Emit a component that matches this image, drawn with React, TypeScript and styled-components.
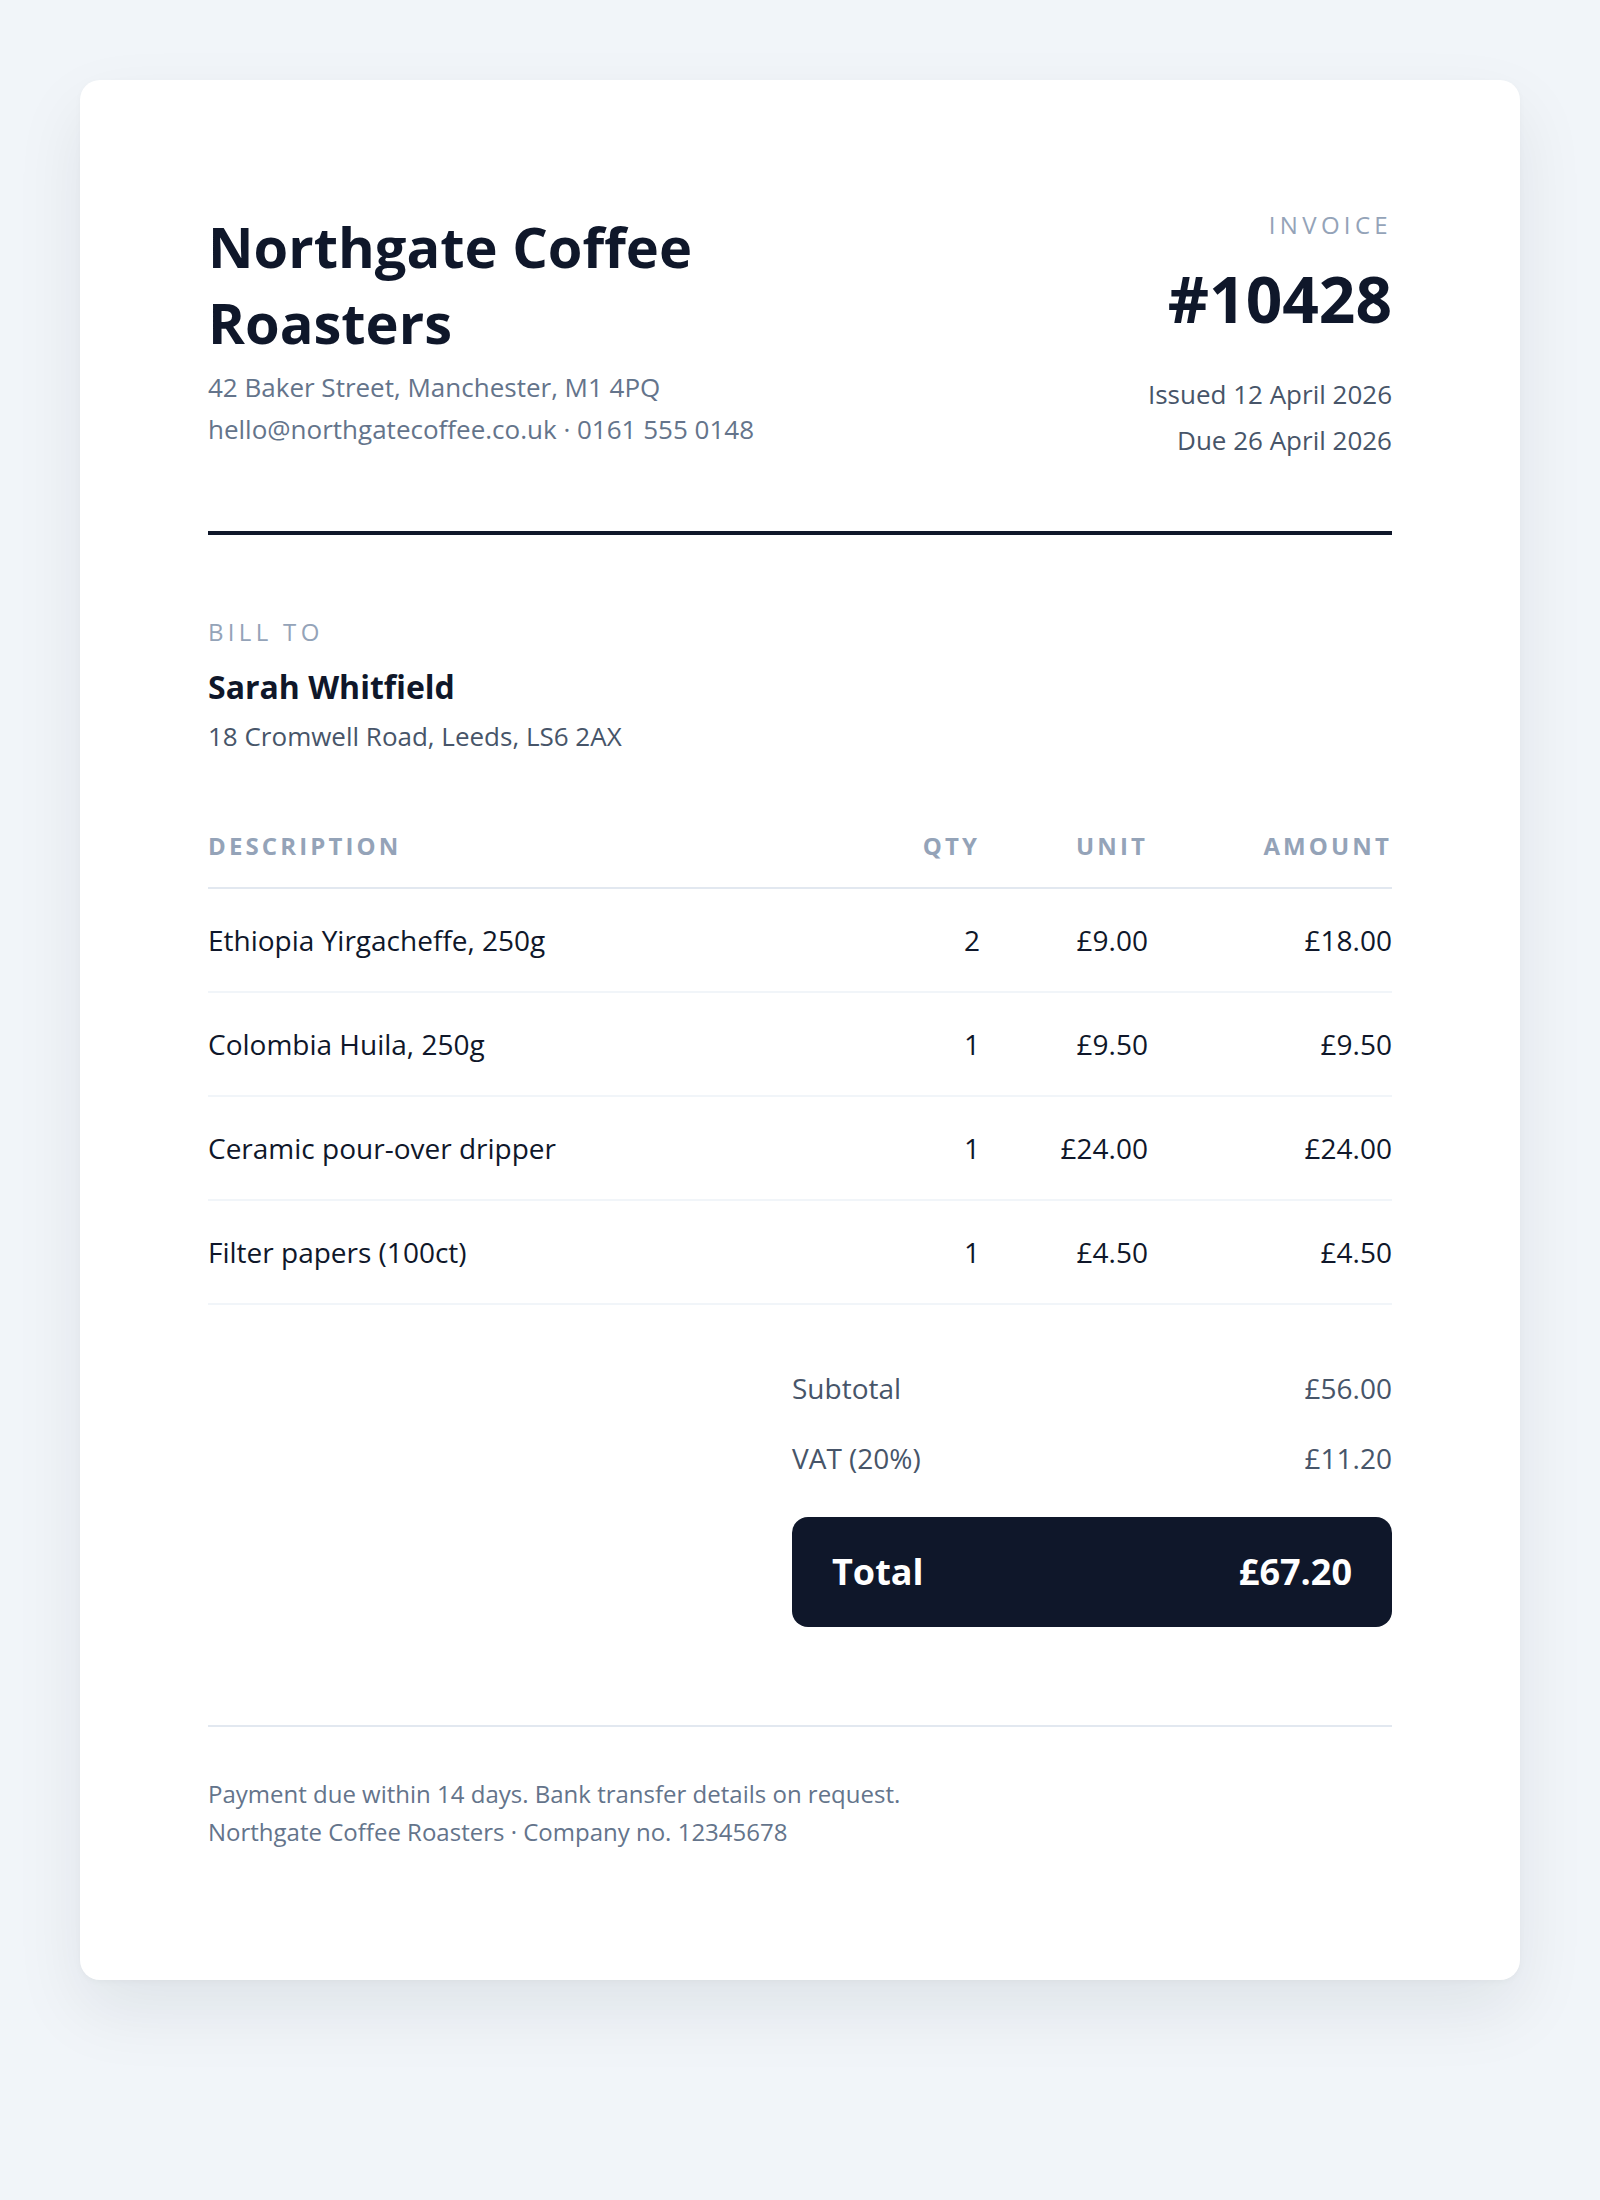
import React from "react";
import styled, { createGlobalStyle } from "styled-components";

const GlobalStyle = createGlobalStyle`
  body {
    margin: 0;
    background: #f1f5f9;
    font-family: "Open Sans", "Liberation Sans", sans-serif;
    color: #0f172a;
  }
`;

const Page = styled.div`
  display: flex;
  justify-content: center;
  padding: 80px 0 220px;
`;

const Card = styled.div`
  width: 1440px;
  box-sizing: border-box;
  padding: 128px;
  background: #ffffff;
  border-radius: 20px;
  box-shadow: 0 30px 70px rgba(15, 23, 42, 0.08), 0 2px 6px rgba(15, 23, 42, 0.03);
`;

const Header = styled.header`
  display: flex;
  justify-content: space-between;
  align-items: flex-start;
  padding-bottom: 68px;
  border-bottom: 4px solid #0f172a;
`;

const Brand = styled.div`
  max-width: 640px;
`;

const CompanyName = styled.h1`
  margin: 0;
  font-size: 56px;
  line-height: 76px;
  font-weight: 700;
  color: #0f172a;
`;

const InfoLines = styled.div<{ $tone?: "muted" | "soft"; $lh: number }>`
  font-size: 26px;
  line-height: ${p => p.$lh}px;
  color: ${p => (p.$tone === "soft" ? "#475569" : "#64748b")};
`;

const BrandInfo = styled(InfoLines)`
  margin-top: 6px;
`;

const Meta = styled.div`
  display: flex;
  flex-direction: column;
  align-items: flex-end;
  text-align: right;
`;

const Label = styled.div`
  font-size: 24px;
  line-height: 33px;
  letter-spacing: 0.18em;
  text-transform: uppercase;
  color: #94a3b8;
`;

const InvoiceNumber = styled.div`
  margin-top: 20px;
  font-size: 64px;
  line-height: 76px;
  font-weight: 700;
  color: #0f172a;
`;

const Dates = styled(InfoLines)`
  margin-top: 34px;
`;

const BillTo = styled.section`
  margin-top: 80px;
`;

const ClientName = styled.div`
  margin-top: 17px;
  font-size: 32px;
  line-height: 44px;
  font-weight: 700;
  color: #0f172a;
`;

const ClientAddress = styled(InfoLines)`
  margin-top: 7px;
`;

const Table = styled.div`
  margin-top: 73px;
`;

const Row = styled.div<{ $head?: boolean }>`
  display: grid;
  grid-template-columns: 1fr 120px 168px 244px;
  align-items: center;
  padding: ${p => (p.$head ? "0 0 25px" : "30px 0")};
  border-bottom: 2px solid ${p => (p.$head ? "#e2e8f0" : "#f1f5f9")};
`;

const HeadCell = styled.div<{ $right?: boolean }>`
  font-size: 24px;
  line-height: 33px;
  font-weight: 700;
  letter-spacing: 0.13em;
  color: #94a3b8;
  text-align: ${p => (p.$right ? "right" : "left")};
`;

const Cell = styled.div<{ $right?: boolean }>`
  font-size: 28px;
  line-height: 42px;
  color: #0f172a;
  text-align: ${p => (p.$right ? "right" : "left")};
`;

const Summary = styled.div`
  display: flex;
  justify-content: flex-end;
  margin-top: 48px;
`;

const Totals = styled.div`
  width: 600px;
`;

const TotalLine = styled.div`
  display: flex;
  justify-content: space-between;
  padding: 14px 0;
  font-size: 28px;
  line-height: 42px;
  color: #475569;
`;

const GrandTotal = styled.div`
  display: flex;
  justify-content: space-between;
  margin-top: 24px;
  padding: 28px 40px;
  border-radius: 16px;
  background: #0f172a;
  color: #ffffff;
  font-size: 36px;
  line-height: 54px;
  font-weight: 700;
`;

const Footer = styled.footer`
  margin-top: 98px;
  padding-top: 48px;
  border-top: 2px solid #e2e8f0;
  font-size: 24px;
  line-height: 38.4px;
  color: #64748b;
`;

type Item = {
  description: string;
  qty: number;
  unit: string;
  amount: string;
};

const items: Item[] = [
  { description: "Ethiopia Yirgacheffe, 250g", qty: 2, unit: "£9.00", amount: "£18.00" },
  { description: "Colombia Huila, 250g", qty: 1, unit: "£9.50", amount: "£9.50" },
  { description: "Ceramic pour-over dripper", qty: 1, unit: "£24.00", amount: "£24.00" },
  { description: "Filter papers (100ct)", qty: 1, unit: "£4.50", amount: "£4.50" },
];

function App() {
  return (
    <>
      <GlobalStyle />
      <Page>
        <Card>
          <Header>
            <Brand>
              <CompanyName>Northgate Coffee Roasters</CompanyName>
              <BrandInfo $lh={42}>
                <div>42 Baker Street, Manchester, M1 4PQ</div>
                <div>hello@northgatecoffee.co.uk · 0161 555 0148</div>
              </BrandInfo>
            </Brand>
            <Meta>
              <Label>Invoice</Label>
              <InvoiceNumber>#10428</InvoiceNumber>
              <Dates $tone="soft" $lh={46}>
                <div>Issued 12 April 2026</div>
                <div>Due 26 April 2026</div>
              </Dates>
            </Meta>
          </Header>

          <BillTo>
            <Label>Bill to</Label>
            <ClientName>Sarah Whitfield</ClientName>
            <ClientAddress $tone="soft" $lh={40}>18 Cromwell Road, Leeds, LS6 2AX</ClientAddress>
          </BillTo>

          <Table>
            <Row $head>
              <HeadCell>DESCRIPTION</HeadCell>
              <HeadCell $right>QTY</HeadCell>
              <HeadCell $right>UNIT</HeadCell>
              <HeadCell $right>AMOUNT</HeadCell>
            </Row>
            {items.map(item => (
              <Row key={item.description}>
                <Cell>{item.description}</Cell>
                <Cell $right>{item.qty}</Cell>
                <Cell $right>{item.unit}</Cell>
                <Cell $right>{item.amount}</Cell>
              </Row>
            ))}
          </Table>

          <Summary>
            <Totals>
              <TotalLine>
                <span>Subtotal</span>
                <span>£56.00</span>
              </TotalLine>
              <TotalLine>
                <span>VAT (20%)</span>
                <span>£11.20</span>
              </TotalLine>
              <GrandTotal>
                <span>Total</span>
                <span>£67.20</span>
              </GrandTotal>
            </Totals>
          </Summary>

          <Footer>
            <div>Payment due within 14 days. Bank transfer details on request.</div>
            <div>Northgate Coffee Roasters · Company no. 12345678</div>
          </Footer>
        </Card>
      </Page>
    </>
  );
}

export default App;
